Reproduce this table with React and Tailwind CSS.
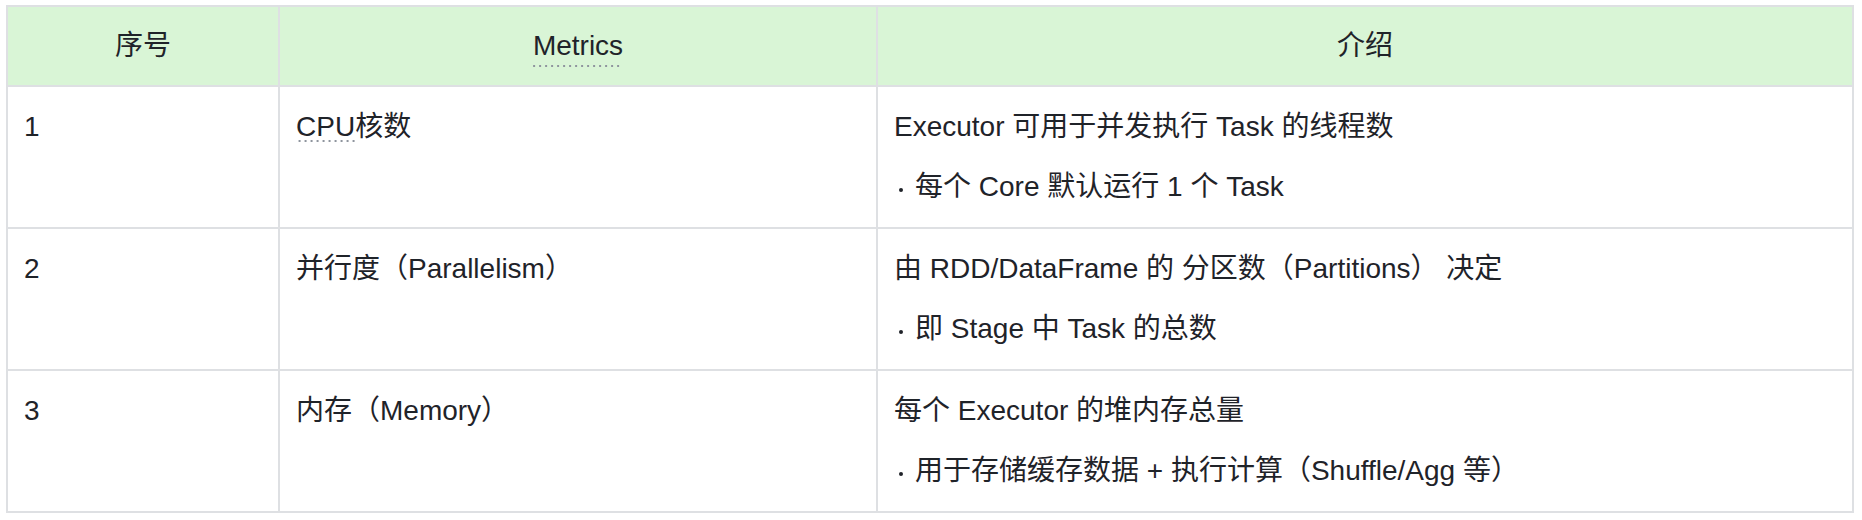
import React from 'react';

// dotted "glossary" underline, like the doc editor draws under linked terms
const Term = ({ children }) => (
  <span className="bg-[linear-gradient(to_right,#8f959e_2px,transparent_2px)] bg-[length:6px_2px] bg-repeat-x bg-bottom">
    {children}
  </span>
);

const rows = [
  {
    id: '1',
    metric: (
      <>
        <Term>CPU</Term>核数
      </>
    ),
    desc: 'Executor 可用于并发执行 Task 的线程数',
    note: '每个 Core 默认运行 1 个 Task',
  },
  {
    id: '2',
    metric: '并行度（Parallelism）',
    desc: '由 RDD/DataFrame 的 分区数（Partitions） 决定',
    note: '即 Stage 中 Task 的总数',
  },
  {
    id: '3',
    metric: '内存（Memory）',
    desc: '每个 Executor 的堆内存总量',
    note: '用于存储缓存数据 + 执行计算（Shuffle/Agg 等）',
  },
];

const headCell = 'h-[80px] bg-[#d9f5d6] flex items-center justify-center border-r-2 border-b-2 border-[#dee0e3]';
const bodyCell = 'px-4 py-5 border-r-2 border-b-2 border-[#dee0e3] leading-[40px]';

export default function App() {
  return (
    <div className="min-h-screen bg-white pt-[5px] pl-[6px] text-[28px] text-[#1f2329] font-['Liberation_Sans','Noto_Sans_CJK_SC',sans-serif]">
      <div className="grid grid-cols-[272px_598px_976px] w-[1848px] border-l-2 border-t-2 border-[#dee0e3]">
        <div className={headCell}>序号</div>
        <div className={headCell}>
          <Term>Metrics</Term>
        </div>
        <div className={headCell}>介绍</div>

        {rows.map((row) => (
          <React.Fragment key={row.id}>
            <div className={bodyCell}>{row.id}</div>
            <div className={bodyCell}>{row.metric}</div>
            <div className={`${bodyCell} flex flex-col gap-5`}>
              <div>{row.desc}</div>
              <div className="flex items-center">
                <span className="ml-[5px] mr-[12px] mt-[6px] w-[4px] h-[4px] rounded-full bg-[#1f2329] shrink-0" />
                <span>{row.note}</span>
              </div>
            </div>
          </React.Fragment>
        ))}
      </div>
    </div>
  );
}
